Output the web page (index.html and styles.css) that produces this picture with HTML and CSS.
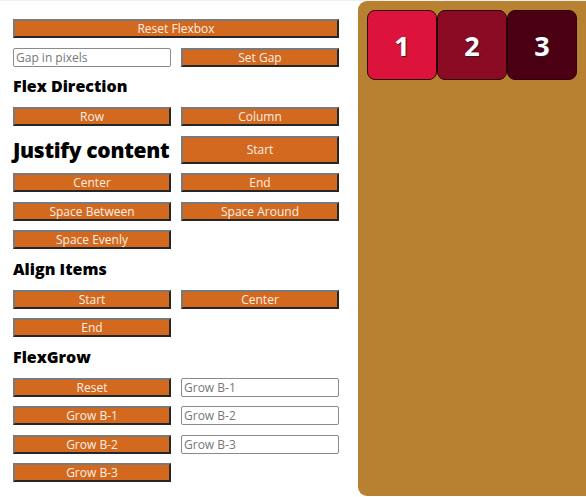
FILE: index.html
```html
<!DOCTYPE html>
<html>
<head>
<meta charset="utf-8">
<link rel="stylesheet" href="styles.css">
</head>
<body>
<div class="page">
  <div class="controls">
    <button class="btn wide">Reset Flexbox</button>
    <input class="field" placeholder="Gap in pixels">
    <button class="btn">Set Gap</button>
    <h2 class="head wide">Flex Direction</h2>
    <button class="btn">Row</button>
    <button class="btn">Column</button>
    <h1 class="head big">Justify content</h1>
    <button class="btn tall">Start</button>
    <button class="btn">Center</button>
    <button class="btn">End</button>
    <button class="btn">Space Between</button>
    <button class="btn">Space Around</button>
    <button class="btn">Space Evenly</button>
    <h2 class="head wide">Align Items</h2>
    <button class="btn">Start</button>
    <button class="btn">Center</button>
    <button class="btn">End</button>
    <h2 class="head wide">FlexGrow</h2>
    <button class="btn">Reset</button>
    <input class="field" placeholder="Grow B-1">
    <button class="btn">Grow B-1</button>
    <input class="field" placeholder="Grow B-2">
    <button class="btn">Grow B-2</button>
    <input class="field" placeholder="Grow B-3">
    <button class="btn">Grow B-3</button>
  </div>
  <div class="stage">
    <div class="box b1">1</div>
    <div class="box b2">2</div>
    <div class="box b3">3</div>
  </div>
</div>
</body>
</html>
```
FILE: styles.css
```css
html, body {
  margin: 0;
  padding: 0;
  background: #fff;
}
body {
  font-family: "Open Sans", "Liberation Sans", sans-serif;
  border-top: 1px solid #f0f0f0;
  height: 496px;
  overflow: hidden;
}
.page {
  display: flex;
  height: 496px;
}
.controls {
  width: 326px;
  flex: none;
  padding: 18px 19px 0 13px;
  display: grid;
  grid-template-columns: 158px 158px;
  column-gap: 10px;
  row-gap: 9.5px;
  align-content: start;
  align-items: start;
}
.wide {
  grid-column: 1 / 3;
}
.btn {
  height: 19px;
  margin: 0;
  padding: 0;
  box-sizing: border-box;
  background: #d2691e;
  color: #fbefe6;
  font-family: "Open Sans", "Liberation Sans", sans-serif;
  font-size: 12px;
  line-height: 15px;
  border: 2px solid;
  border-color: #7a7a7a #262626 #262626 #7a7a7a;
}
.btn.tall {
  height: 28px;
}
.field {
  height: 19px;
  margin: 0;
  padding: 0 2px;
  box-sizing: border-box;
  border: 1px solid #8a8a8a;
  border-radius: 2px;
  font-family: "Open Sans", "Liberation Sans", sans-serif;
  font-size: 12px;
  line-height: 17px;
  color: #333;
}
.field::placeholder {
  color: #777;
}
.head {
  margin: 0;
  font-size: 16px;
  font-weight: 800;
  line-height: 21.5px;
  height: 21.5px;
  color: #000;
  white-space: nowrap;
}
.head.big {
  font-size: 21px;
  line-height: 28px;
  height: 28px;
  letter-spacing: -0.3px;
}
.stage {
  flex: 1;
  background: #b88132;
  border-radius: 9px 0 0 9px;
  padding: 9px;
  display: flex;
  align-items: flex-start;
  height: 477px;
}
.box {
  width: 70px;
  height: 70px;
  box-sizing: border-box;
  border: 1px solid #2a0608;
  border-radius: 8px;
  color: #fff;
  font-size: 27px;
  font-weight: 700;
  display: flex;
  align-items: center;
  justify-content: center;
  text-shadow: 1px 1px 1px #222;
  flex: none;
}
.b1 { background: #dc143c; }
.b2 { background: #8b0a24; }
.b3 { background: #4a0012; }
```
